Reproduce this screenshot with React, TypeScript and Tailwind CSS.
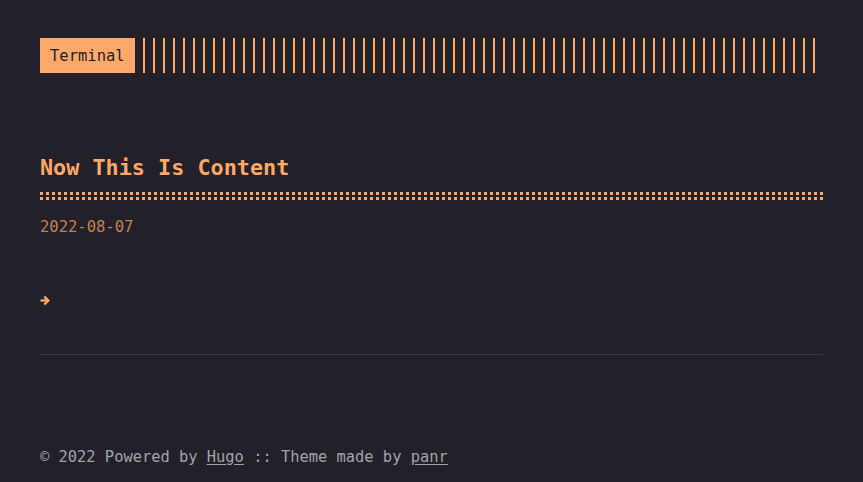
export default function App() {
  return (
    <div
      className="min-h-[482px] w-full bg-[#222129] px-[40px] pt-[38px] text-[15.5px] leading-[24px] text-[#a3a2a8]"
      style={{ fontFamily: '"DejaVu Sans Mono", "Liberation Mono", monospace' }}
    >
      <header className="flex h-[35px] items-stretch">
        <div className="flex items-center bg-[#ffa86a] px-[10px] text-[#221f29]">Terminal</div>
        <div className="ml-2 flex-1 bg-[repeating-linear-gradient(90deg,#ffa86a_0,#ffa86a_2px,transparent_0,transparent_10px)]" />
      </header>

      <main>
        <h1 className="mt-[81px] text-[21.8px] font-bold leading-[28px] text-[#ffa86a]">Now This Is Content</h1>
        <div className="mt-[10px] h-[8px] border-y-[3px] border-dotted border-[#ffa86a]" />
        <div className="mt-[15px] text-[#c4804f]">2022-08-07</div>
        <svg className="mt-[56px] block" width="10" height="11" viewBox="0 0 10 11">
          <path d="M0.5 5.5H8" stroke="#ffa86a" strokeWidth="2.4" fill="none" />
          <path d="M4.3 1.5L8.3 5.5L4.3 9.5" stroke="#ffa86a" strokeWidth="2.4" fill="none" />
        </svg>
        <hr className="mt-[48px] border-0 border-t border-[#3b3a41]" />
      </main>

      <footer className="mt-[90px] pb-[13px] text-[15.4px]">
        © 2022 Powered by <a className="underline underline-offset-2">Hugo</a> :: Theme made by{" "}
        <a className="underline underline-offset-2">panr</a>
      </footer>
    </div>
  );
}
